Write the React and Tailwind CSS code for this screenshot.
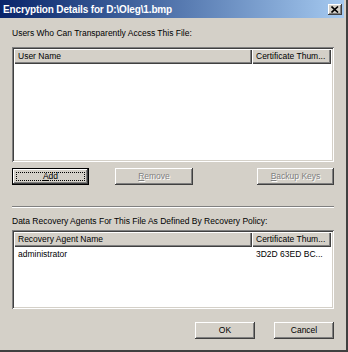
import React from 'react';

const font = { fontFamily: '"Liberation Sans", Arial, sans-serif' };

const raised =
  'shadow-[inset_-1px_-1px_#404040,inset_1px_1px_#ffffff,inset_-2px_-2px_#808080,inset_2px_2px_#d4d0c8]';
const sunken =
  'shadow-[inset_1px_1px_#808080,inset_-1px_-1px_#ffffff,inset_2px_2px_#404040,inset_-2px_-2px_#d4d0c8]';
const headerCell =
  'h-[15px] flex items-center px-[4px] bg-[#d4d0c8] shadow-[inset_1px_1px_#ffffff,inset_-1px_-1px_#404040,inset_-2px_-2px_#808080] whitespace-nowrap overflow-hidden';

const Button = ({ children, disabled, isDefault, className = '' }) => {
  if (isDefault) {
    return (
      <div className={`h-[17px] border border-black bg-[#d4d0c8] ${className}`}>
        <div className={`h-full ${raised} p-[3px]`}>
          <div className="h-full border border-dotted border-black flex items-center justify-center text-[8.5px] text-black">
            {children}
          </div>
        </div>
      </div>
    );
  }
  return (
    <div
      className={`h-[17px] bg-[#d4d0c8] ${raised} flex items-center justify-center text-[8.5px] ${
        disabled ? 'text-[#808080] [text-shadow:1px_1px_#ffffff]' : 'text-black'
      } ${className}`}
    >
      {children}
    </div>
  );
};

const ListView = ({ height, cols, rows = [] }) => (
  <div className={`bg-white p-[2px] ${sunken} ${height}`}>
    <div className="flex text-[8.5px] text-black">
      <div className={`${headerCell} w-[238px]`}>{cols[0]}</div>
      <div className={`${headerCell} w-[79px]`}>{cols[1]}</div>
    </div>
    {rows.map((r, i) => (
      <div key={i} className="flex h-[14px] items-center text-[8.5px] text-black">
        <div className="w-[238px] px-[4px]">{r[0]}</div>
        <div className="w-[79px] px-[4px] whitespace-nowrap">{r[1]}</div>
      </div>
    ))}
  </div>
);

export default function App() {
  return (
    <div
      style={font}
      className="w-[348px] h-[352px] bg-[#d4d0c8] border-r-2 border-b-2 border-r-[#404040] border-b-[#404040] flex flex-col overflow-hidden"
    >
      {/* title bar */}
      <div className="h-[18px] mr-[2px] bg-gradient-to-r from-[#0a246a] to-[#a6caf0] flex items-center justify-between pl-[3px] pr-[2px]">
        <span className="text-white font-bold text-[10px] tracking-[-0.15px] whitespace-nowrap">
          Encryption Details for D:\Oleg\1.bmp
        </span>
        <div className={`w-[14px] h-[11px] bg-[#d4d0c8] ${raised} flex items-center justify-center`}>
          <svg width="8" height="7" viewBox="0 0 8 7">
            <path d="M0.5 0.5 L7 6.5 M7 0.5 L0.5 6.5" stroke="#000" strokeWidth="1.6" />
          </svg>
        </div>
      </div>

      <div className="flex flex-col px-[12px]">
        <div className="mt-[10px] h-[11px] leading-[11px] text-[8.5px] text-black whitespace-nowrap">
          Users Who Can Transparently Access This File:
        </div>

        <div className="mt-[8px]">
          <ListView height="h-[115px]" cols={['User Name', 'Certificate Thum...']} />
        </div>

        <div className="mt-[6px] flex">
          <Button isDefault className="w-[77px]">
            <span><u>A</u>dd</span>
          </Button>
          <Button disabled className="w-[78px] ml-[26px]">
            <span><u>R</u>emove</span>
          </Button>
          <div className="flex-1" />
          <Button disabled className="w-[77px]">
            <span><u>B</u>ackup Keys</span>
          </Button>
        </div>

        <div className="mt-[21px] border-t border-t-[#808080] border-b border-b-white" />

        <div className="mt-[8px] h-[11px] leading-[11px] text-[8.5px] text-black whitespace-nowrap">
          Data Recovery Agents For This File As Defined By Recovery Policy:
        </div>

        <div className="mt-[3px]">
          <ListView
            height="h-[79px]"
            cols={['Recovery Agent Name', 'Certificate Thum...']}
            rows={[['administrator', '3D2D 63ED BC...']]}
          />
        </div>

        <div className="mt-[13px] flex justify-end gap-[19px]">
          <Button className="w-[60px]">OK</Button>
          <Button className="w-[60px]">Cancel</Button>
        </div>
      </div>
    </div>
  );
}
